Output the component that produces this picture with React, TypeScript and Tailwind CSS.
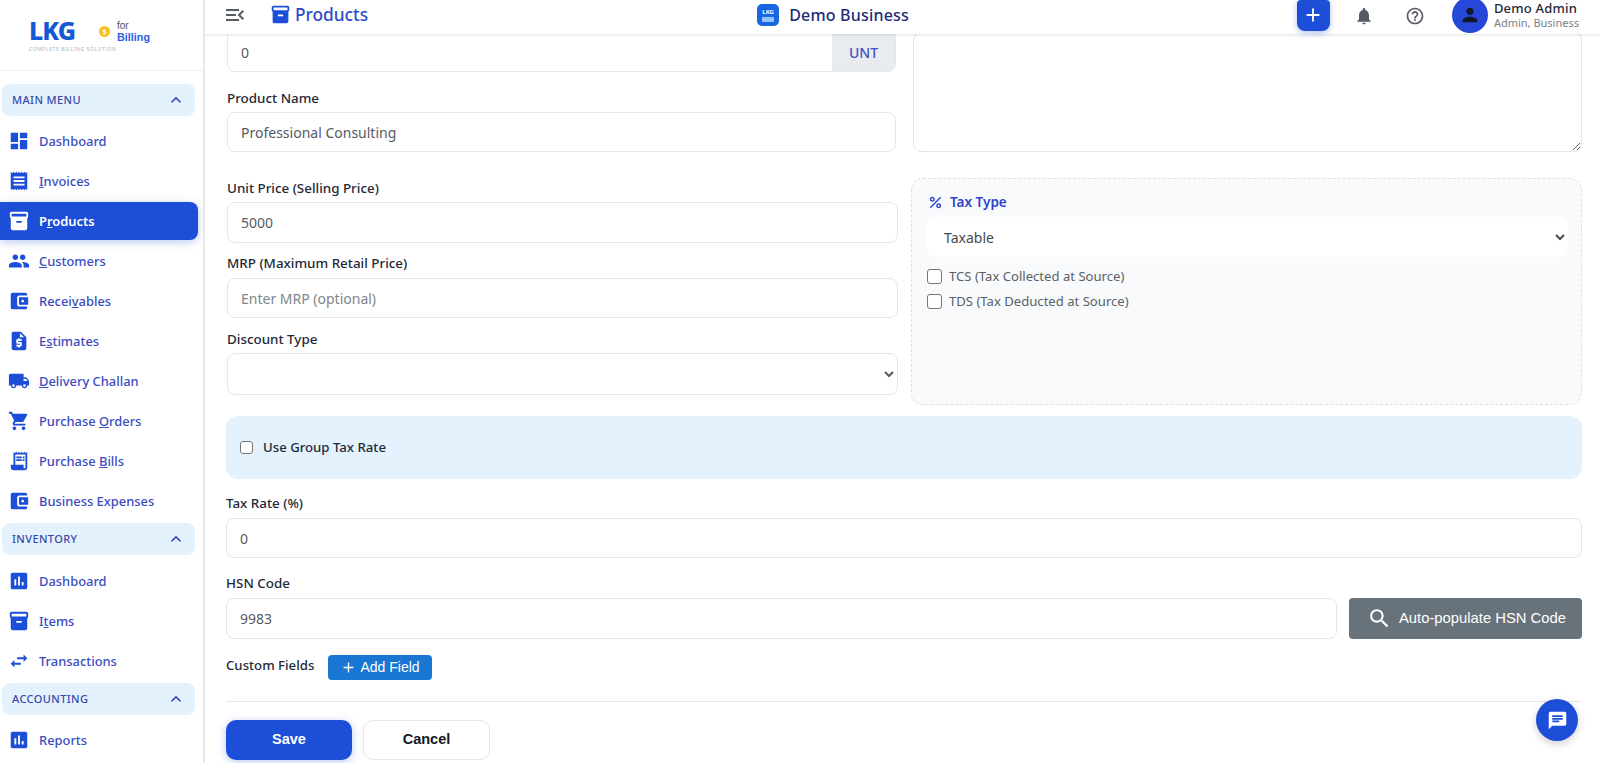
import type { ReactNode } from "react";
import {
  MdAccountBalanceWallet,
  MdAdd,
  MdAssessment,
  MdChat,
  MdDashboard,
  MdHelpOutline,
  MdInventory2,
  MdKeyboardArrowUp,
  MdLocalShipping,
  MdMenuOpen,
  MdNotifications,
  MdPeople,
  MdPercent,
  MdPerson,
  MdReceipt,
  MdReceiptLong,
  MdRequestQuote,
  MdSearch,
  MdShoppingCart,
  MdSwapHoriz,
} from "react-icons/md";

const inputClass =
  "block w-full rounded-lg border border-[#e3e6ea] bg-white px-[13px] text-[14px] text-[#555b62] placeholder:text-[#80868c] outline-none";
const labelClass = "block h-5 text-[13.4px] font-medium leading-5 text-[#1f2937]";

const SectionHeader = ({ title, className = "" }: { title: string; className?: string }) => (
  <div className={`mx-[2px] flex h-8 w-[193px] items-center justify-between rounded-lg bg-[#e3f2fd] pl-[10px] pr-[9px] ${className}`}>
    <span className="text-[11px] font-medium tracking-[0.4px] text-[#3949ab]">{title}</span>
    <MdKeyboardArrowUp className="text-[20px] text-[#2f43b5]" />
  </div>
);

const NavItem = ({ icon, children, active }: { icon: ReactNode; children: ReactNode; active?: boolean }) => (
  <div
    className={
      active
        ? "my-px flex h-[38px] w-[198px] items-center rounded-r-lg bg-[#1d4ed8] pl-[8px] text-white shadow-[0_2px_8px_rgba(29,78,216,0.3)]"
        : "flex h-10 items-center pl-[8px] text-[#3b4cc0]"
    }
  >
    <span className={`flex w-[31px] shrink-0 text-[22px] ${active ? "text-white" : "text-[#1d4ed8]"}`}>{icon}</span>
    <span className={`pt-[2px] text-[12.9px] ${active ? "font-semibold" : "font-medium"}`}>{children}</span>
  </div>
);

const Sidebar = () => (
  <aside className="flex h-[763px] w-[205px] shrink-0 flex-col overflow-hidden border-r-2 border-[#e5e7eb] bg-white">
    {/* Logo */}
    <div className="h-[71px] shrink-0 border-b border-[#eceef1] pl-[29px] pt-[15px]">
      <div className="flex items-center">
        <span className="w-[70px] text-[25px] font-extrabold leading-7 tracking-[-1px] text-[#1558d6]">LKG</span>
        <span className="mt-[3px] flex h-[11px] w-[11px] items-center justify-center rounded-full bg-[#fbbf24] text-[7px] font-bold leading-none text-white">$</span>
        <div className="ml-[7px] mt-[5px] flex flex-col font-['Liberation_Sans',Arial,sans-serif]">
          <span className="text-[10px] leading-[11px] text-[#4b5563]">for</span>
          <span className="text-[10.8px] font-bold leading-[13px] text-[#2f5fe0]">Billing</span>
        </div>
      </div>
      <div className="mt-[2px] text-[5px] tracking-[0.6px] text-[#a9b4c0]">COMPLETE BILLING SOLUTION</div>
    </div>

    <SectionHeader title="MAIN MENU" className="mt-[13px] mb-[5px]" />
    <NavItem icon={<MdDashboard />}>Dashboard</NavItem>
    <NavItem icon={<MdReceipt />}><u>I</u>nvoices</NavItem>
    <NavItem icon={<MdInventory2 />} active>P<u>r</u>oducts</NavItem>
    <NavItem icon={<MdPeople />}><u>C</u>ustomers</NavItem>
    <NavItem icon={<MdAccountBalanceWallet />}>Recei<u>v</u>ables</NavItem>
    <NavItem icon={<MdRequestQuote />}>E<u>s</u>timates</NavItem>
    <NavItem icon={<MdLocalShipping />}><u>D</u>elivery Challan</NavItem>
    <NavItem icon={<MdShoppingCart />}>Purchase <u>O</u>rders</NavItem>
    <NavItem icon={<MdReceiptLong />}>Purchase <u>B</u>ills</NavItem>
    <NavItem icon={<MdAccountBalanceWallet />}>Business Expenses</NavItem>

    <SectionHeader title="INVENTORY" className="mt-[2px] mb-[6px]" />
    <NavItem icon={<MdAssessment />}>Dashboard</NavItem>
    <NavItem icon={<MdInventory2 />}>I<u>t</u>ems</NavItem>
    <NavItem icon={<MdSwapHoriz />}>Transactions</NavItem>

    <SectionHeader title="ACCOUNTING" className="mt-[2px] mb-[5px]" />
    <NavItem icon={<MdAssessment />}>Reports</NavItem>
  </aside>
);

const Header = () => (
  <header className="relative z-10 flex h-[34px] shrink-0 items-center bg-white pl-[17px] shadow-[0_1px_3px_rgba(0,0,0,0.12)]">
    <MdMenuOpen className="-mt-[5px] w-[26px] text-[24px] text-[#565b61]" />
    <MdInventory2 className="-mt-[5px] ml-[22px] text-[21px] text-[#1d4ed8]" />
    <span className="-mt-[4px] ml-[4px] text-[17.3px] font-medium text-[#2f4cc9]">Products</span>

    <span className="-mt-[4px] ml-[389px] flex h-[22px] w-[22px] flex-col items-center justify-center rounded-[5px] bg-[#1a66e0]">
      <span className="text-[6px] font-bold leading-[7px] text-white">LKG</span>
      <span className="mt-px h-[5px] w-[12px] rounded-[1px] bg-[#93c5fd]" />
    </span>
    <span className="-mt-[4px] ml-[10px] text-[16px] font-medium tracking-[0.2px] text-[#1e2a78]">Demo Business</span>

    <div className="ml-auto flex items-center pr-[21px]">
      <span className="-mt-[4px] flex h-[31px] w-[33px] items-center justify-center rounded-b-lg rounded-t-sm bg-[#1d4ed8] text-white shadow-[0_2px_6px_rgba(29,78,216,0.35)]">
        <MdAdd className="text-[22px]" />
      </span>
      <MdNotifications className="-mt-[3px] ml-[24px] text-[20px] text-[#565b61]" />
      <MdHelpOutline className="-mt-[3px] ml-[31px] text-[20px] text-[#565b61]" />
      <span className="ml-[27px] -mt-[4px] flex h-[36px] w-[36px] items-center justify-center rounded-full bg-[#2747d8] text-[#111827]">
        <MdPerson className="text-[22px]" />
      </span>
      <div className="ml-[6px] flex -translate-y-[2px] flex-col">
        <span className="text-[13px] font-medium leading-[16px] tracking-[0.2px] text-[#1f2937]">Demo Admin</span>
        <span className="text-[11px] leading-[14px] text-[#7b8087]">Admin, Business</span>
      </div>
    </div>
  </header>
);

const Checkbox = ({ className = "" }: { className?: string }) => (
  <input type="checkbox" className={`shrink-0 appearance-none rounded-[3px] border border-[#767676] bg-white ${className}`} />
);

const ProductForm = () => (
  <div className="-mt-[2px] pl-[21px] pr-[18px]">
    {/* Quantity + description */}
    <div className="flex gap-[17px]">
      <div className="w-[670px] shrink-0 pl-px">
        <div className="flex h-10 overflow-hidden rounded-b-lg border border-[#e3e6ea]">
          <input defaultValue="0" className="min-w-0 flex-1 px-[13px] text-[14px] text-[#555b62] outline-none" />
          <span className="flex w-[63px] items-center justify-center bg-[#e9ecef] text-[14px] font-medium text-[#3f51c8]">UNT</span>
        </div>
        <label className={`${labelClass} mt-[16px]`}>Product Name</label>
        <input defaultValue="Professional Consulting" className={`${inputClass} mt-1 h-10`} />
      </div>
      <textarea className="min-w-0 flex-1 rounded-lg border border-[#e3e6ea] outline-none" />
    </div>

    {/* Pricing + tax type */}
    <div className="mt-[26px] flex gap-[13px]">
      <div className="w-[672px] shrink-0 pl-px">
        <label className={labelClass}>Unit Price (Selling Price)</label>
        <input defaultValue="5000" className={`${inputClass} mt-1 h-[41px]`} />
        <label className={`${labelClass} mt-[10px]`}>MRP (Maximum Retail Price)</label>
        <input placeholder="Enter MRP (optional)" className={`${inputClass} mt-[5px] h-10`} />
        <label className={`${labelClass} mt-[11px]`}>Discount Type</label>
        <select className={`${inputClass} mt-1 h-[42px]`} />
      </div>
      <div className="h-[227px] min-w-0 flex-1 rounded-xl border border-dashed border-[#dde1e6] bg-[#f8fafc] pl-[15px] pr-[13px] pt-[13px]">
        <div className="flex h-5 items-center text-[13.5px] font-semibold text-[#2f43c8]">
          <MdPercent className="text-[17px]" />
          <span className="ml-[6px]">Tax Type</span>
        </div>
        <select className="mt-[5px] block h-10 w-full rounded-lg bg-white px-[13px] text-[14px] text-[#444a50] outline-none">
          <option>Taxable</option>
        </select>
        <label className="mt-[12px] flex h-[15px] items-center text-[13.1px] text-[#5b6168]">
          <Checkbox className="h-[15px] w-[15px]" />
          <span className="ml-[7px]">TCS (Tax Collected at Source)</span>
        </label>
        <label className="mt-[10px] flex h-[15px] items-center text-[13.1px] text-[#5b6168]">
          <Checkbox className="h-[15px] w-[15px]" />
          <span className="ml-[7px]">TDS (Tax Deducted at Source)</span>
        </label>
      </div>
    </div>

    {/* Group tax */}
    <div className="mt-[11px] flex h-[63px] items-center rounded-xl bg-[#e3f2fd] pl-[14px]">
      <Checkbox className="h-[13px] w-[13px]" />
      <span className="ml-[10px] text-[13.2px] font-medium text-[#1f2937]">Use Group Tax Rate</span>
    </div>

    <label className={`${labelClass} mt-[14px]`}>Tax Rate (%)</label>
    <input defaultValue="0" className={`${inputClass} mt-[5px] h-10`} />

    <label className={`${labelClass} mt-[15px]`}>HSN Code</label>
    <div className="mt-[5px] flex gap-3">
      <input defaultValue="9983" className={`${inputClass} h-[41px] flex-1`} />
      <button className="flex h-[41px] w-[233px] items-center rounded-[4px] bg-[#68727a] pl-[18px] font-['Liberation_Sans',Arial,sans-serif] text-[14.8px] text-white">
        <MdSearch className="text-[25px]" />
        <span className="ml-[7px]">Auto-populate HSN Code</span>
      </button>
    </div>

    <div className="mt-[16px] flex h-[25px] items-center">
      <span className="w-[102px] -translate-y-[2px] text-[13.2px] font-medium text-[#1f2937]">Custom Fields</span>
      <button className="flex h-[25px] w-[104px] items-center justify-center rounded-[4px] bg-[#1976d2] font-['Liberation_Sans',Arial,sans-serif] text-[14px] text-white">
        <MdAdd className="text-[17px]" />
        <span className="ml-[3px]">Add Field</span>
      </button>
    </div>

    <hr className="mt-[21px] border-[#e5e7eb]" />

    <div className="mt-[18px] flex gap-[11px] font-['Liberation_Sans',Arial,sans-serif] text-[14.5px] font-bold">
      <button className="h-10 w-[126px] rounded-[10px] bg-[#1d4ed8] text-white shadow-[0_2px_8px_rgba(29,78,216,0.3)]">Save</button>
      <button className="h-10 w-[127px] rounded-[10px] border border-[#e5e7eb] bg-white text-[#111827]">Cancel</button>
    </div>
  </div>
);

export default function App() {
  return (
    <div className="relative flex h-[763px] w-[1600px] overflow-hidden bg-white font-['Noto_Sans',sans-serif]">
      <Sidebar />
      <main className="flex min-w-0 flex-1 flex-col overflow-hidden">
        <Header />
        <ProductForm />
      </main>
      <button className="absolute left-[1536px] top-[699px] flex h-[42px] w-[42px] items-center justify-center rounded-full bg-[#1d4ed8] text-white shadow-[0_3px_8px_rgba(0,0,0,0.18)]">
        <MdChat className="text-[21px]" />
      </button>
    </div>
  );
}
